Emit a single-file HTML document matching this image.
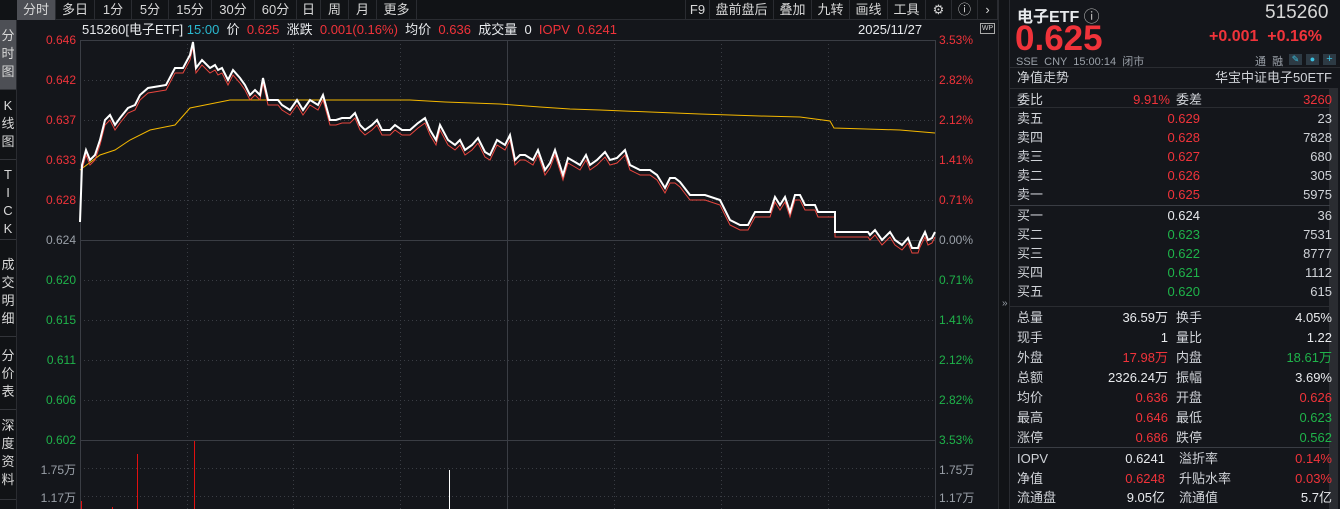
<!DOCTYPE html>
<html><head><meta charset="utf-8"><style>
*{margin:0;padding:0;box-sizing:border-box}
body{width:1340px;height:509px;background:#14161b;overflow:hidden;position:relative;font-family:"Liberation Sans","Noto Sans CJK SC",sans-serif;color:#d0d3d8;font-size:13px}
.a{position:absolute;white-space:nowrap}
.r{color:#f0333a}.g{color:#1fb34a}.w{color:#e8eaed}.gr{color:#9aa0a8}.c{color:#2ab8d0}
.tab{position:absolute;top:0;height:20px;line-height:19px;font-size:13px;color:#d8d8d8;border-right:1px solid #2a2c31;text-align:center}
.side{position:absolute;left:0;width:16px;font-size:13px;line-height:18px;text-align:center;color:#d8d8d8;border-bottom:1px solid #33353a}
.ax{position:absolute;font-size:12px;text-align:right;width:68px;left:8px}
.pax{position:absolute;font-size:12px;left:939px}
.row{position:absolute;left:1017px;width:315px;height:19px;font-size:13px;line-height:19px}
.row span{position:absolute;white-space:nowrap}
</style></head><body>
<div class="a" style="left:0;top:0;width:998px;height:20px;background:#111316;border-bottom:1px solid #2a2c31"></div>
<div class="a" style="left:0;top:0;width:17px;height:20px;background:#111316"></div>
<div class="tab" style="left:17px;width:39px;background:#4d4f55">分时</div>
<div class="tab" style="left:56px;width:39px">多日</div>
<div class="tab" style="left:95px;width:37px">1分</div>
<div class="tab" style="left:132px;width:37px">5分</div>
<div class="tab" style="left:169px;width:43px">15分</div>
<div class="tab" style="left:212px;width:43px">30分</div>
<div class="tab" style="left:255px;width:42px">60分</div>
<div class="tab" style="left:297px;width:24px">日</div>
<div class="tab" style="left:321px;width:28px">周</div>
<div class="tab" style="left:349px;width:28px">月</div>
<div class="tab" style="left:377px;width:40px">更多</div>
<div class="tab" style="left:685px;width:25px;border-left:1px solid #2a2c31">F9</div>
<div class="tab" style="left:710px;width:64px">盘前盘后</div>
<div class="tab" style="left:774px;width:38px">叠加</div>
<div class="tab" style="left:812px;width:38px">九转</div>
<div class="tab" style="left:850px;width:38px">画线</div>
<div class="tab" style="left:888px;width:38px">工具</div>
<div class="tab" style="left:926px;width:26px">⚙</div>
<div class="tab" style="left:952px;width:26px">ⓘ</div>
<div class="tab" style="left:978px;width:20px">›</div>
<div class="a" style="left:0;top:20px;width:17px;height:489px;background:#111316;border-right:1px solid #2a2c31"></div>
<div class="side" style="top:20px;height:70px;padding-top:7px;background:#4d4f55">分<br>时<br>图</div>
<div class="side" style="top:90px;height:70px;padding-top:7px">K<br>线<br>图</div>
<div class="side" style="top:160px;height:80px;padding-top:6px">T<br>I<br>C<br>K</div>
<div class="side" style="top:240px;height:97px;padding-top:16px">成<br>交<br>明<br>细</div>
<div class="side" style="top:337px;height:73px;padding-top:10px">分<br>价<br>表</div>
<div class="side" style="top:410px;height:90px;padding-top:7px">深<br>度<br>资<br>料</div>
<div class="a" style="left:82px;top:21px;font-size:13px;line-height:17px"><span class="w">515260[电子ETF]</span> <span class="c">15:00</span> &nbsp;<span class="w">价</span> &nbsp;<span class="r">0.625</span> &nbsp;<span class="w">涨跌</span> &nbsp;<span class="r">0.001(0.16%)</span> &nbsp;<span class="w">均价</span> &nbsp;<span class="r">0.636</span> &nbsp;<span class="w">成交量</span> &nbsp;<span class="w">0</span> &nbsp;<span class="r">IOPV</span> &nbsp;<span class="r">0.6241</span></div>
<div class="a w" style="left:858px;top:21px;font-size:13px;line-height:17px">2025/11/27</div>
<div class="a" style="left:980px;top:23px;width:15px;height:11px;border:1px solid #aaa;font-size:7px;line-height:9px;text-align:center;color:#ccc">WP</div>
<svg class="a" style="left:0;top:0" width="1000" height="509">
<g stroke="#3a3d44" stroke-dasharray="1,3" stroke-width="1">
<line x1="80" y1="80.5" x2="935" y2="80.5"/><line x1="80" y1="120.5" x2="935" y2="120.5"/><line x1="80" y1="160.5" x2="935" y2="160.5"/><line x1="80" y1="200.5" x2="935" y2="200.5"/>
<line x1="80" y1="280.5" x2="935" y2="280.5"/><line x1="80" y1="320.5" x2="935" y2="320.5"/><line x1="80" y1="360.5" x2="935" y2="360.5"/><line x1="80" y1="400.5" x2="935" y2="400.5"/>
<line x1="80" y1="468.5" x2="935" y2="468.5"/><line x1="80" y1="496.5" x2="935" y2="496.5"/>
<line x1="187.5" y1="40" x2="187.5" y2="509"/><line x1="293.5" y1="40" x2="293.5" y2="509"/><line x1="400.5" y1="40" x2="400.5" y2="509"/>
<line x1="614.5" y1="40" x2="614.5" y2="509"/><line x1="721.5" y1="40" x2="721.5" y2="509"/><line x1="828.5" y1="40" x2="828.5" y2="509"/>
</g>
<g stroke="#3a3d44" stroke-width="1">
<line x1="80" y1="240.5" x2="935" y2="240.5"/><line x1="80" y1="440.5" x2="935" y2="440.5"/>
<line x1="80.5" y1="40" x2="80.5" y2="509"/><line x1="935.5" y1="40" x2="935.5" y2="509"/><line x1="507.5" y1="40" x2="507.5" y2="509"/>
<line x1="80" y1="40.5" x2="935" y2="40.5"/>
</g>
<line x1="998.5" y1="0" x2="998.5" y2="509" stroke="#2a2c31"/>
<polyline fill="none" stroke="#f5b800" stroke-width="1" points="80,170 100,155 115,150 130,140 150,130 175,125 190,108 210,104 230,100 240,100 300,100 410,100 445,102 500,104 540,107 570,109 600,110 650,112 700,114 760,116 800,117 830,121 834,128 900,130 935,133"/>
<polyline fill="none" stroke="#e8453e" stroke-width="1" transform="translate(0,5)" points="82,165 86,150 90,160 95,155 100,140 105,120 110,115 115,125 120,118 128,108 135,105 140,95 148,88 160,86 166,85 175,68 183,68 190,55 193,42 196,68 202,60 210,68 215,65 218,70 222,68 228,80 233,70 240,78 245,85 250,95 255,90 260,95 263,78 268,100 278,100 282,105 290,110 297,100 303,110 310,100 318,105 323,95 330,120 336,120 342,118 350,118 355,113 360,125 365,130 372,125 377,120 382,130 390,130 395,125 402,130 410,130 418,123 425,118 430,130 436,140 440,125 448,140 455,145 460,140 465,150 472,145 478,138 485,152 490,155 497,140 505,145 510,135 515,160 520,155 525,155 533,160 538,150 545,170 550,163 555,150 563,175 568,158 575,162 580,165 586,155 590,165 597,160 605,152 610,160 617,158 625,150 630,165 640,170 650,170 657,175 665,188 670,178 675,178 680,182 690,195 705,195 720,200 730,220 740,225 748,225 755,212 770,212 775,197 780,205 785,197 790,212 795,195 800,195 805,205 815,205 818,212 835,212 835,232 868,232 870,235 875,230 882,240 890,232 895,240 902,245 908,238 912,248 918,248 920,242 925,232 928,240 932,238 935,232"/>
<polyline fill="none" stroke="#ffffff" stroke-width="2" points="80,222 82,165 86,150 90,160 95,155 100,140 105,120 110,115 115,125 120,118 128,108 135,105 140,95 148,88 160,86 166,85 175,68 183,68 190,55 193,42 196,68 202,60 210,68 215,65 218,70 222,68 228,80 233,70 240,78 245,85 250,95 255,90 260,95 263,78 268,100 278,100 282,105 290,110 297,100 303,110 310,100 318,105 323,95 330,120 336,120 342,118 350,118 355,113 360,125 365,130 372,125 377,120 382,130 390,130 395,125 402,130 410,130 418,123 425,118 430,130 436,140 440,125 448,140 455,145 460,140 465,150 472,145 478,138 485,152 490,155 497,140 505,145 510,135 515,160 520,155 525,155 533,160 538,150 545,170 550,163 555,150 563,175 568,158 575,162 580,165 586,155 590,165 597,160 605,152 610,160 617,158 625,150 630,165 640,170 650,170 657,175 665,188 670,178 675,178 680,182 690,195 705,195 720,200 730,220 740,225 748,225 755,212 770,212 775,197 780,205 785,197 790,212 795,195 800,195 805,205 815,205 818,212 835,212 835,232 868,232 870,235 875,230 882,240 890,232 895,240 902,245 908,238 912,248 918,248 920,242 925,232 928,240 932,238 935,232"/>
<line x1="81.5" y1="501" x2="81.5" y2="509" stroke="#e01010"/>
<line x1="112.5" y1="507" x2="112.5" y2="509" stroke="#e01010"/>
<line x1="137.5" y1="454" x2="137.5" y2="509" stroke="#e01010"/>
<line x1="194.5" y1="441" x2="194.5" y2="509" stroke="#e01010"/>
<line x1="449.5" y1="470" x2="449.5" y2="509" stroke="#ffffff"/>
</svg>
<div class="ax r" style="top:33px">0.646</div>
<div class="ax r" style="top:73px">0.642</div>
<div class="ax r" style="top:113px">0.637</div>
<div class="ax r" style="top:153px">0.633</div>
<div class="ax r" style="top:193px">0.628</div>
<div class="ax gr" style="top:233px">0.624</div>
<div class="ax g" style="top:273px">0.620</div>
<div class="ax g" style="top:313px">0.615</div>
<div class="ax g" style="top:353px">0.611</div>
<div class="ax g" style="top:393px">0.606</div>
<div class="ax g" style="top:433px">0.602</div>
<div class="ax gr" style="top:461px">1.75万</div>
<div class="ax gr" style="top:489px">1.17万</div>
<div class="pax r" style="top:33px">3.53%</div>
<div class="pax r" style="top:73px">2.82%</div>
<div class="pax r" style="top:113px">2.12%</div>
<div class="pax r" style="top:153px">1.41%</div>
<div class="pax r" style="top:193px">0.71%</div>
<div class="pax gr" style="top:233px">0.00%</div>
<div class="pax g" style="top:273px">0.71%</div>
<div class="pax g" style="top:313px">1.41%</div>
<div class="pax g" style="top:353px">2.12%</div>
<div class="pax g" style="top:393px">2.82%</div>
<div class="pax g" style="top:433px">3.53%</div>
<div class="pax gr" style="top:461px">1.75万</div>
<div class="pax gr" style="top:489px">1.17万</div>
<div class="a" style="left:999px;top:0;width:11px;height:509px;background:#111316;border-right:1px solid #2a2c31"></div>
<div class="a gr" style="left:1002px;top:298px;font-size:10px">»</div>
<div class="a" style="left:1329px;top:88px;width:9px;height:421px;background:#2a2c31"></div>
<div class="a w" style="left:1017px;top:3px;font-size:16px;font-weight:bold">电子ETF <span style="font-weight:normal;color:#bbb">ⓘ</span></div>
<div class="a" style="left:1265px;top:2px;font-size:19px;color:#d8d8d8">515260</div>
<div class="a r" style="left:1015px;top:21px;font-size:35px;font-weight:bold;line-height:36px">0.625</div>
<div class="a r" style="left:1209px;top:28px;font-size:16px;font-weight:bold">+0.001 &nbsp;+0.16%</div>
<div class="a gr" style="left:1016px;top:53px;font-size:11px">SSE &nbsp;CNY &nbsp;15:00:14 &nbsp;闭市</div>
<div class="a gr" style="left:1255px;top:53px;font-size:11px">通 &nbsp;融</div>
<div class="a" style="left:1289px;top:54px;width:13px;height:11px;background:#2d3a44;color:#3bc0e0;font-size:9px;text-align:center">✎</div>
<div class="a" style="left:1306px;top:54px;width:13px;height:11px;background:#2d3a44;color:#3bc0e0;font-size:9px;text-align:center">●</div>
<div class="a" style="left:1323px;top:54px;width:13px;height:11px;background:#2d3a44;color:#3bc0e0;font-size:11px;line-height:11px;text-align:center">+</div>
<div class="a" style="left:1010px;top:67px;width:330px;height:1px;background:#2a2c31"></div>
<div class="row" style="top:68px"><span style="left:0">净值走势</span><span style="right:0">华宝中证电子50ETF</span></div>
<div class="a" style="left:1010px;top:88px;width:320px;height:1px;background:#2a2c31"></div>
<div class="row" style="top:90px"><span style="left:0">委比</span><span class="r" style="right:162px">9.91%</span><span style="left:159px">委差</span><span class="r" style="right:0">3260</span></div>
<div class="a" style="left:1010px;top:107px;width:320px;height:1px;background:#2a2c31"></div>
<div class="row" style="top:109px"><span>卖五</span><span class="r" style="right:132px">0.629</span><span style="right:0">23</span></div>
<div class="row" style="top:128px"><span>卖四</span><span class="r" style="right:132px">0.628</span><span style="right:0">7828</span></div>
<div class="row" style="top:147px"><span>卖三</span><span class="r" style="right:132px">0.627</span><span style="right:0">680</span></div>
<div class="row" style="top:166px"><span>卖二</span><span class="r" style="right:132px">0.626</span><span style="right:0">305</span></div>
<div class="row" style="top:185px"><span>卖一</span><span class="r" style="right:132px">0.625</span><span style="right:0">5975</span></div>
<div class="a" style="left:1010px;top:205px;width:320px;height:1px;background:#3a3d44"></div>
<div class="row" style="top:206px"><span>买一</span><span class="w" style="right:132px">0.624</span><span style="right:0">36</span></div>
<div class="row" style="top:225px"><span>买二</span><span class="g" style="right:132px">0.623</span><span style="right:0">7531</span></div>
<div class="row" style="top:244px"><span>买三</span><span class="g" style="right:132px">0.622</span><span style="right:0">8777</span></div>
<div class="row" style="top:263px"><span>买四</span><span class="g" style="right:132px">0.621</span><span style="right:0">1112</span></div>
<div class="row" style="top:282px"><span>买五</span><span class="g" style="right:132px">0.620</span><span style="right:0">615</span></div>
<div class="a" style="left:1010px;top:306px;width:320px;height:1px;background:#2a2c31"></div>
<div class="row" style="top:308px"><span>总量</span><span class="w" style="right:164px">36.59万</span><span style="left:159px">换手</span><span class="w" style="right:0">4.05%</span></div>
<div class="row" style="top:328px"><span>现手</span><span class="w" style="right:164px">1</span><span style="left:159px">量比</span><span class="w" style="right:0">1.22</span></div>
<div class="row" style="top:348px"><span>外盘</span><span class="r" style="right:164px">17.98万</span><span style="left:159px">内盘</span><span class="g" style="right:0">18.61万</span></div>
<div class="row" style="top:368px"><span>总额</span><span class="w" style="right:164px">2326.24万</span><span style="left:159px">振幅</span><span class="w" style="right:0">3.69%</span></div>
<div class="row" style="top:388px"><span>均价</span><span class="r" style="right:164px">0.636</span><span style="left:159px">开盘</span><span class="r" style="right:0">0.626</span></div>
<div class="row" style="top:408px"><span>最高</span><span class="r" style="right:164px">0.646</span><span style="left:159px">最低</span><span class="g" style="right:0">0.623</span></div>
<div class="row" style="top:428px"><span>涨停</span><span class="r" style="right:164px">0.686</span><span style="left:159px">跌停</span><span class="g" style="right:0">0.562</span></div>
<div class="a" style="left:1010px;top:447px;width:320px;height:1px;background:#3a3d44"></div>
<div class="row" style="top:449px"><span>IOPV</span><span class="w" style="right:167px">0.6241</span><span style="left:162px">溢折率</span><span class="r" style="right:0">0.14%</span></div>
<div class="row" style="top:469px"><span>净值</span><span class="r" style="right:167px">0.6248</span><span style="left:162px">升贴水率</span><span class="r" style="right:0">0.03%</span></div>
<div class="row" style="top:488px"><span>流通盘</span><span class="w" style="right:167px">9.05亿</span><span style="left:162px">流通值</span><span class="w" style="right:0">5.7亿</span></div>
</body></html>
